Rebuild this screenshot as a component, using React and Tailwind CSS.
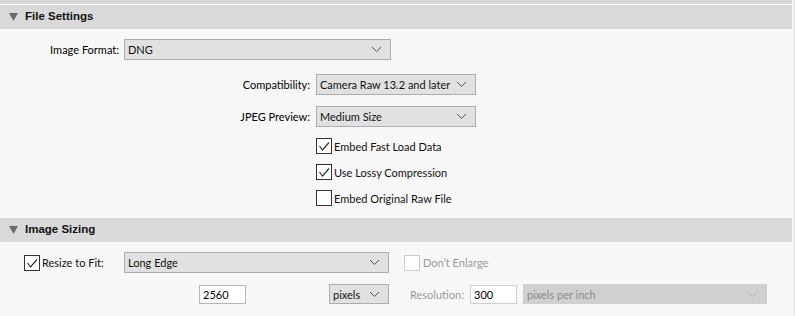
import React from "react";

const ui = { fontFamily: 'Lato, "Liberation Sans", Arial, sans-serif' };
const head = { fontFamily: 'Tahoma, "Liberation Sans", Arial, sans-serif' };

const Chevron = ({ muted }) => (
  <svg width="11" height="7" viewBox="0 0 11 7" className="shrink-0">
    <polyline
      points="1,1 5.5,5.5 10,1"
      fill="none"
      stroke={muted ? "#b5b5b5" : "#555"}
      strokeWidth="1"
    />
  </svg>
);

const Select = ({ value, className, muted }) => (
  <div
    className={`flex shrink-0 items-center justify-between whitespace-nowrap border pl-[3px] pr-[8px] ${
      muted
        ? "border-[#cfcfcf] bg-[#d0d0d0] text-[#8a8a8a]"
        : "border-[#adadad] bg-[#e1e1e1] text-[#111]"
    } ${className}`}
  >
    <span>{value}</span>
    <Chevron muted={muted} />
  </div>
);

const Check = ({ checked, muted, label, gap = "gap-[2px]" }) => (
  <div className={`flex items-center whitespace-nowrap ${gap}`}>
    <div
      className={`flex h-[16px] w-[16px] shrink-0 items-center justify-center border bg-white ${
        muted ? "border-[#cccccc]" : "border-[#333]"
      }`}
    >
      {checked && (
        <svg width="14" height="14" viewBox="0 0 14 14">
          <polyline points="2.5,7 5.5,11 12,3.5" fill="none" stroke="#333" strokeWidth="1.2" />
        </svg>
      )}
    </div>
    <span className={muted ? "text-[#9a9a9a]" : "text-[#111]"}>{label}</span>
  </div>
);

const Header = ({ title }) => (
  <div className="flex h-[24px] items-center gap-[7px] bg-[#d9d9d9] pl-[9px]">
    <svg width="9" height="8" viewBox="0 0 9 8">
      <polygon points="0,0 9,0 4.5,8" fill="#6b6b6b" />
    </svg>
    <span style={head} className="text-[11.5px] font-bold text-[#111]">
      {title}
    </span>
  </div>
);

export default function App() {
  return (
    <div style={ui} className="flex h-[316px] w-[795px] bg-[#f7f7f7] text-[11px] leading-none">
      <div className="flex w-[792px] flex-col">
        <div className="h-[4px] bg-[#d9d9d9]" />
        <div className="h-px bg-white" />
        <Header title="File Settings" />

        <div className="mt-[10px] flex h-[21px] items-center">
          <span className="w-[119px] text-right">Image Format:</span>
          <Select value="DNG" className="ml-[5px] h-[21px] w-[267px]" />
        </div>

        <div className="mt-[14px] flex h-[21px] items-center">
          <span className="w-[310px] text-right">Compatibility:</span>
          <Select value="Camera Raw 13.2 and later" className="ml-[6px] h-[21px] w-[160px]" />
        </div>

        <div className="mt-[11px] flex h-[21px] items-center">
          <span className="w-[310px] text-right">JPEG Preview:</span>
          <Select value="Medium Size" className="ml-[6px] h-[21px] w-[160px]" />
        </div>

        <div className="mt-[11px] flex flex-col gap-[10px] pl-[316px]">
          <Check checked label="Embed Fast Load Data" />
          <Check checked label="Use Lossy Compression" />
          <Check label="Embed Original Raw File" />
        </div>

        <div className="mt-[11px] h-px bg-white" />
        <Header title="Image Sizing" />

        <div className="mt-[10px] flex h-[21px] items-center pl-[24px]">
          <div className="w-[100px]">
            <Check checked label="Resize to Fit:" />
          </div>
          <Select value="Long Edge" className="h-[21px] w-[265px]" />
          <div className="ml-[15px]">
            <Check muted label="Don’t Enlarge" gap="gap-[3px]" />
          </div>
        </div>

        <div className="mt-[11px] flex h-[20px] items-center pl-[199px]">
          <div className="flex h-[19px] w-[47px] shrink-0 items-center border border-[#b5b5b5] bg-white pl-[3px]">
            2560
          </div>
          <Select value="pixels" className="ml-[83px] h-[20px] w-[60px]" />
          <span className="ml-[21px] w-[60px] shrink-0 text-[#9a9a9a]">Resolution:</span>
          <div className="flex h-[19px] w-[47px] shrink-0 items-center border border-[#cfcfcf] bg-white pl-[3px]">
            300
          </div>
          <Select muted value="pixels per inch" className="ml-[6px] h-[20px] w-[244px]" />
        </div>
      </div>
      <div className="w-[3px] border-r border-[#e4e4e4] bg-[#f7f7f7]" />
    </div>
  );
}
